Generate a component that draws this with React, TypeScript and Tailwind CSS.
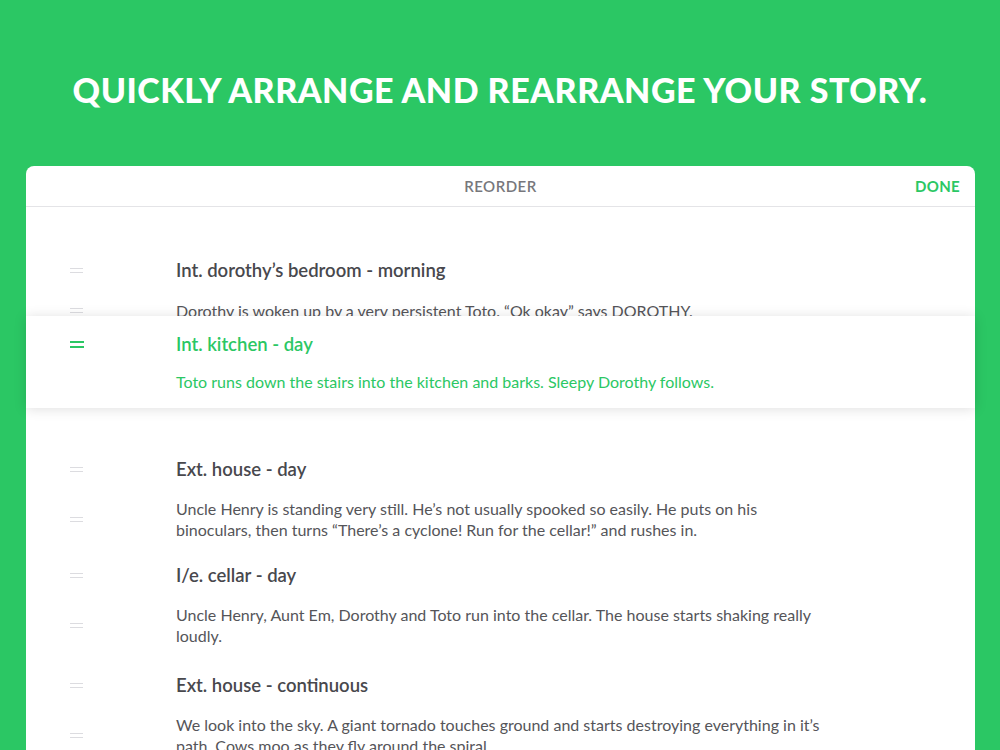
const scenes = [
  {
    title: 'Ext. house - day',
    body: 'Uncle Henry is standing very still. He\u2019s not usually spooked so easily. He puts on his binoculars, then turns \u201cThere\u2019s a cyclone! Run for the cellar!\u201d and rushes in.',
    gap: '',
  },
  {
    title: 'I/e. cellar - day',
    body: 'Uncle Henry, Aunt Em, Dorothy and Toto run into the cellar. The house starts shaking really loudly.',
    gap: 'mt-[23px]',
  },
  {
    title: 'Ext. house - continuous',
    body: 'We look into the sky. A giant tornado touches ground and starts destroying everything in it\u2019s path. Cows moo as they fly around the spiral.',
    gap: 'mt-[27px]',
  },
];

function Handle({ active = false }: { active?: boolean }) {
  if (active) {
    return (
      <div className="flex flex-col gap-[3px] w-[14px]">
        <div className="h-[2px] bg-[#2bc764]" />
        <div className="h-[2px] bg-[#2bc764]" />
      </div>
    );
  }
  return (
    <div className="flex flex-col gap-[3px] w-[13px]">
      <div className="h-px bg-[#dcdce0]" />
      <div className="h-px bg-[#dcdce0]" />
    </div>
  );
}

function Line({ children, kind }: { children: React.ReactNode; kind: 'title' | 'body' }) {
  return (
    <div className="flex">
      <div className="w-[150px] pl-[44px] flex items-center shrink-0">
        <Handle />
      </div>
      {kind === 'title' ? (
        <div className="text-[18.5px] leading-[24px] font-semibold text-[#48484d]">{children}</div>
      ) : (
        <div className="w-[648px] text-[16px] leading-[21px] text-[#555559]">{children}</div>
      )}
    </div>
  );
}

export default function App() {
  return (
    <div
      className="w-full h-[750px] bg-[#2bc764] overflow-hidden"
      style={{ fontFamily: 'Lato, "Open Sans", sans-serif' }}
    >
      {/* Headline */}
      <h1 className="pt-[72px] text-center text-white text-[34px] leading-[36px] font-black tracking-[0.5px]">
        QUICKLY ARRANGE AND REARRANGE YOUR STORY.
      </h1>

      {/* Card */}
      <div className="mt-[58px] ml-[26px] mr-[25px] h-[600px] bg-white rounded-t-[8px]">
        <div className="relative h-[41px] flex items-center justify-center border-b border-[#e4e4e7]">
          <span className="text-[15px] font-semibold tracking-[0.5px] text-[#77777c]">REORDER</span>
          <span className="absolute right-[15px] text-[15px] font-bold tracking-[0.3px] text-[#2bc764]">DONE</span>
        </div>

        <div className="relative">
          {/* Row in place */}
          <div className="pt-[51px]">
            <Line kind="title">Int. dorothy&rsquo;s bedroom - morning</Line>
            <div className="mt-[18px]">
              <Line kind="body">Dorothy is woken up by a very persistent Toto. &ldquo;Ok okay&rdquo; says DOROTHY.</Line>
            </div>
          </div>

          {/* Placeholder left by the dragged row */}
          <div className="h-[136px]" />

          {scenes.map((s) => (
            <div key={s.title} className={s.gap}>
              <Line kind="title">{s.title}</Line>
              <div className="mt-[17px]">
                <Line kind="body">{s.body}</Line>
              </div>
            </div>
          ))}

          {/* Dragged row */}
          <div className="absolute left-0 right-0 top-[109px] h-[92px] bg-white shadow-[0_1px_12px_rgba(0,0,0,0.13)] flex flex-col justify-center">
            <div className="flex">
              <div className="w-[150px] pl-[44px] flex items-center shrink-0">
                <Handle active />
              </div>
              <div className="text-[18.5px] leading-[24px] font-semibold text-[#2bc764]">Int. kitchen - day</div>
            </div>
            <div className="mt-[15px] pl-[150px] text-[16px] leading-[21px] text-[#2bc764]">
              Toto runs down the stairs into the kitchen and barks. Sleepy Dorothy follows.
            </div>
          </div>
        </div>
      </div>
    </div>
  );
}
